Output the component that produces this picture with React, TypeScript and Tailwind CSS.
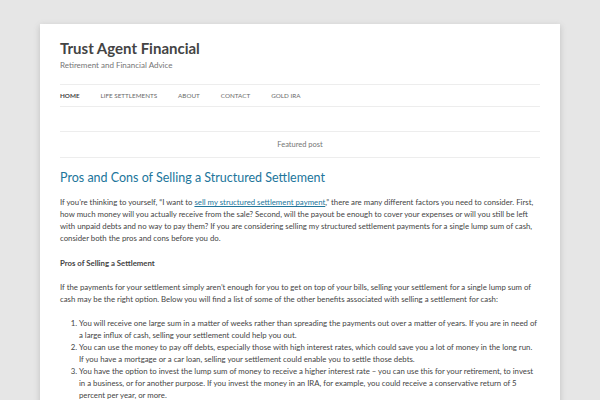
const navItems = ["Home", "Life Settlements", "About", "Contact", "Gold IRA"];

const listItems = [
  "You will receive one large sum in a matter of weeks rather than spreading the payments out over a matter of years. If you are in need of a large influx of cash, selling your settlement could help you out.",
  "You can use the money to pay off debts, especially those with high interest rates, which could save you a lot of money in the long run. If you have a mortgage or a car loan, selling your settlement could enable you to settle those debts.",
  "You have the option to invest the lump sum of money to receive a higher interest rate – you can use this for your retirement, to invest in a business, or for another purpose. If you invest the money in an IRA, for example, you could receive a conservative return of 5 percent per year, or more.",
];

const App = () => {
  return (
    <div className="h-[400px] overflow-hidden bg-[#e6e6e6] pt-6 px-10 font-['Lato',sans-serif]">
      <div className="bg-white px-5 pb-6 shadow-[0_2px_6px_rgba(100,100,100,0.3)]">
        <header className="pt-[15px]">
          <h1 className="text-[15px] font-bold leading-[18px] text-[#444]">Trust Agent Financial</h1>
          <p className="mt-[2px] text-[8px] leading-[12px] text-[#757575]">Retirement and Financial Advice</p>
          <nav className="mt-[13px] flex h-[23px] items-center gap-[21px] border-y border-[#ededed] text-[6.3px] uppercase text-[#6a6a6a]">
            {navItems.map((item, i) => (
              <span key={i} className={i === 0 ? "font-bold text-[#444]" : ""}>
                {item}
              </span>
            ))}
          </nav>
        </header>

        <div className="mt-[24px] flex h-[27px] items-center justify-center border-y border-[#ededed] text-[7.5px] text-[#757575]">
          Featured post
        </div>

        <article className="mt-[11px] text-[7.8px] leading-[12px] text-[#444]">
          <h2 className="text-[12.5px] leading-[18px] text-[#21759b]">
            Pros and Cons of Selling a Structured Settlement
          </h2>
          <p className="mt-[9px]">
            If you’re thinking to yourself, “I want to{" "}
            <a className="text-[#21759b] underline">sell my structured settlement payment</a>,” there are many different
            factors you need to consider. First, how much money will you actually receive from the sale? Second, will the
            payout be enough to cover your expenses or will you still be left with unpaid debts and no way to pay them? If
            you are considering selling my structured settlement payments for a single lump sum of cash, consider both the
            pros and cons before you do.
          </p>
          <h3 className="mt-[13px] font-bold">Pros of Selling a Settlement</h3>
          <p className="mt-[12px]">
            If the payments for your settlement simply aren’t enough for you to get on top of your bills, selling your
            settlement for a single lump sum of cash may be the right option. Below you will find a list of some of the
            other benefits associated with selling a settlement for cash:
          </p>
          <ol className="mt-[12px] list-decimal pl-[19px] pr-[3px]">
            {listItems.map((item, i) => (
              <li key={i}>{item}</li>
            ))}
          </ol>
        </article>
      </div>
    </div>
  );
};

export default App;
